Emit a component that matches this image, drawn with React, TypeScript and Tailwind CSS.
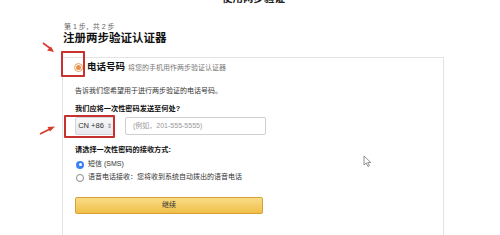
export default function App() {
  const font = { fontFamily: '"Liberation Sans", "Noto Sans CJK SC", sans-serif' };

  return (
    <div className="relative w-[500px] h-[235px] overflow-hidden bg-white text-[#111]" style={font}>
      {/* cut-off heading at top */}
      <div className="h-[5px] overflow-hidden">
        <div className="-mt-[8px] ml-[222px] text-[10.5px] leading-[12px] font-bold text-[#222]">使用两步验证</div>
      </div>

      {/* step title */}
      <div className="ml-[64px] mt-[17px] text-[7px] leading-[10px] text-[#666]">第 1 步，共 2 步</div>
      <div className="ml-[63px] -mt-[1px] text-[11.5px] leading-[14px] font-bold text-[#111]">注册两步验证认证器</div>

      {/* card */}
      <div className="ml-[62px] mt-[12px] w-[382px] h-[200px] border border-b-0 border-[#e4e4e4] pl-[12px]">
        {/* phone option header */}
        <div className="flex items-center h-[18px]">
          <span className="ml-[-1px] w-[9px] h-[9px] rounded-full border border-[#e8a25a] bg-white flex items-center justify-center">
            <span className="w-[5px] h-[5px] rounded-full bg-[#e8904a]" />
          </span>
        </div>
        <div className="flex items-end -mt-[15px] ml-[12px] gap-[3px]">
          <span className="text-[9.5px] leading-[12px] font-bold text-[#111]">电话号码</span>
          <span className="text-[7px] leading-[11px] text-[#777]">将您的手机用作两步验证认证器</span>
        </div>

        <div className="mt-[13px] text-[7px] leading-[10px] text-[#333]">告诉我们您希望用于进行两步验证的电话号码。</div>
        <div className="mt-[8px] text-[7.2px] leading-[10px] font-bold text-[#111]">我们应将一次性密码发送至何处?</div>

        <div className="mt-[3px] flex items-center gap-[10px]">
          <div className="w-[40px] h-[18px] rounded-[2px] border border-[#d5d5d5] bg-gradient-to-b from-[#f7f8fa] to-[#e7e9ec] flex items-center justify-center text-[7.5px] text-[#333]">
            CN +86 <span className="ml-[3px] text-[6px] text-[#777]">⇕</span>
          </div>
          <div className="w-[141px] h-[18px] rounded-[2px] border border-[#cfcfcf] bg-white flex items-center pl-[7px] text-[7px] text-[#999]">
            (例如，201-555-5555)
          </div>
        </div>

        <div className="mt-[10px] text-[7.2px] leading-[10px] font-bold text-[#111]">请选择一次性密码的接收方式:</div>
        <div className="mt-[3px] flex items-center h-[13px] gap-[4px] text-[7px] text-[#333]">
          <span className="ml-[1px] w-[8px] h-[8px] rounded-full bg-[#3b82f6] flex items-center justify-center">
            <span className="w-[3px] h-[3px] rounded-full bg-white" />
          </span>
          短信 (SMS)
        </div>
        <div className="flex items-center h-[13px] gap-[4px] text-[7px] text-[#333]">
          <span className="ml-[1px] w-[8px] h-[8px] rounded-full border border-[#888] bg-white" />
          语音电话接收：您将收到系统自动拨出的语音电话
        </div>

        <div className="mt-[13px] w-[188px] h-[17px] rounded-[2px] border border-[#d6a236] bg-gradient-to-b from-[#f9dc86] to-[#f0bf45] flex items-center justify-center text-[7px] text-[#333]">
          继续
        </div>
      </div>

      {/* red highlight boxes */}
      <div className="absolute left-[61px] top-[51px] w-[24px] h-[26px] border-2 border-[#c8322e] rounded-[1px]" />
      <div className="absolute left-[64px] top-[115px] w-[51px] h-[23px] border-2 border-[#c8322e] rounded-[1px]" />

      {/* red arrows */}
      <svg className="absolute left-[42px] top-[42px]" width="14" height="12" viewBox="0 0 14 12">
        <path d="M1 1 L9 7" stroke="#d83b2b" strokeWidth="1.6" />
        <path d="M12 10 L5 8.5 L9 4.5 Z" fill="#d83b2b" />
      </svg>
      <svg className="absolute left-[39px] top-[125px]" width="18" height="10" viewBox="0 0 18 10">
        <path d="M1 9 L11 4" stroke="#d83b2b" strokeWidth="1.8" />
        <path d="M16 1.5 L8.5 2 L11 6.5 Z" fill="#d83b2b" />
      </svg>

      {/* mouse cursor */}
      <svg className="absolute left-[363px] top-[155px]" width="9" height="12" viewBox="0 0 9 12">
        <path d="M1 1 L1 10 L3.2 8 L5 11.5 L6.4 10.8 L4.7 7.5 L7.8 7.5 Z" fill="#fff" stroke="#777" strokeWidth="0.8" />
      </svg>
    </div>
  );
}
